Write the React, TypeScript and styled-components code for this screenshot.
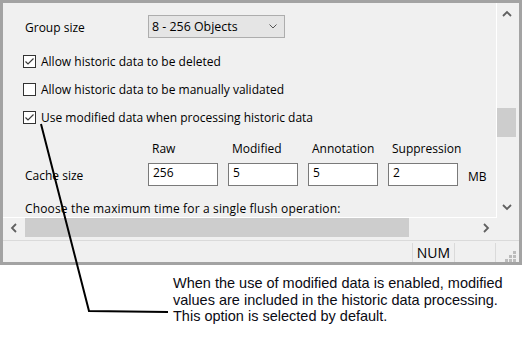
import React from "react"
import styled, { createGlobalStyle } from "styled-components"

const GlobalStyle = createGlobalStyle`
  html, body {
    margin: 0;
    padding: 0;
    background: #ffffff;
  }
  * { box-sizing: border-box; }
`

const uiFont = `"Open Sans", "Noto Sans", "DejaVu Sans", sans-serif`

const Page = styled.div`
  position: relative;
  width: 522px;
  height: 350px;
  background: #ffffff;
  overflow: hidden;
`

const Window = styled.div`
  width: 522px;
  height: 265px;
  border: 3px solid #a3a3a3;
  background: #f0f0f0;
  display: grid;
  grid-template-columns: 494px 22px;
  grid-template-rows: 215px 19px 1fr;
  font-family: ${uiFont};
  font-size: 12px;
  color: #000;
`

const Content = styled.div`
  overflow: hidden;
  border-right: 1px solid #ffffff;
  border-bottom: 1px solid #ffffff;
  padding: 12px 0 0 22px;
  white-space: nowrap;
`

const FormGrid = styled.div`
  display: grid;
  grid-template-columns: 113px 70px 70px 70px 70px auto;
  column-gap: 10px;
`

const FieldLabel = styled.div<{ $top?: number }>`
  line-height: 16px;
  margin-top: ${p => p.$top ?? 0}px;
`

const Select = styled.div`
  grid-column: 2 / span 2;
  width: 137px;
  height: 23px;
  border: 1px solid #adadad;
  background: #e5e5e5;
  display: flex;
  align-items: center;
  justify-content: space-between;
  padding: 0 7px 1px 3px;
  font-size: 12.4px;
`

const CheckList = styled.div`
  margin: 9px 0 0 -2px;
  display: flex;
  flex-direction: column;
`

const CheckRow = styled.label`
  height: 28px;
  display: flex;
  align-items: center;
  gap: 5px;
`

const Box = styled.span`
  width: 13px;
  height: 13px;
  border: 1px solid #333333;
  background: #ffffff;
  display: flex;
  align-items: center;
  justify-content: center;
  flex: none;
`

const CacheGrid = styled(FormGrid)`
  margin-top: 10px;
  row-gap: 6px;
`

const ColHead = styled.div`
  line-height: 16px;
  padding-left: 4px;
`

const Field = styled.div`
  height: 23px;
  border: 1px solid #7a7a7a;
  background: #ffffff;
  padding: 1px 0 0 4px;
  line-height: 16px;
`

const Hint = styled.div`
  margin-top: 15px;
  line-height: 16px;
  letter-spacing: 0.15px;
`

const VScroll = styled.div`
  display: flex;
  flex-direction: column;
  background: #f0f0f0;
`

const HScroll = styled.div`
  display: flex;
  background: #f0f0f0;
`

const ArrowBtn = styled.div<{ $w: number; $h: number }>`
  width: ${p => p.$w}px;
  height: ${p => p.$h}px;
  flex: none;
  display: flex;
  align-items: center;
  justify-content: center;
`

const Track = styled.div<{ $vertical?: boolean }>`
  flex: 1;
  display: flex;
  flex-direction: ${p => (p.$vertical ? "column" : "row")};
`

const Thumb = styled.div<{ $vertical?: boolean }>`
  background: #cdcdcd;
  ${p =>
    p.$vertical
      ? "width: 19px; height: 29px; margin-top: 83px;"
      : "height: 19px; width: 384px;"}
`

const Corner = styled.div``

const StatusBar = styled.div`
  grid-column: 1 / span 2;
  margin-top: 3px;
  border-top: 1px solid #dadada;
  display: flex;
`

const Pane = styled.div<{ $w?: number }>`
  ${p => (p.$w ? `width: ${p.$w}px; flex: none;` : "flex: 1;")}
  margin-top: 2px;
  border-left: 1px solid #dadada;
  display: flex;
  align-items: center;
  justify-content: center;
  font-size: 14px;
  line-height: 16px;
  &:first-child { border-left: none; }
`

const GripPane = styled(Pane)`
  align-items: flex-end;
  justify-content: flex-end;
  padding: 0 3px 0 0;
`

const Note = styled.div`
  margin: 10px 0 0 173px;
  font-family: "Liberation Sans", Arial, sans-serif;
  font-size: 14.5px;
  line-height: 16.7px;
  color: #0b0b14;
`

const Leader = styled.svg`
  position: absolute;
  left: 0;
  top: 0;
  pointer-events: none;
`

const Chevron = ({ dir }: { dir: "up" | "down" | "left" | "right" }) => {
  const pts = {
    up: "1,6 5,2 9,6",
    down: "1,2 5,6 9,2",
    left: "6,1 2,5 6,9",
    right: "2,1 6,5 2,9",
  }[dir]
  const vertical = dir === "up" || dir === "down"
  return (
    <svg width={vertical ? 10 : 8} height={vertical ? 8 : 10} viewBox={vertical ? "0 0 10 8" : "0 0 8 10"}>
      <polyline points={pts} fill="none" stroke="#606060" strokeWidth="1.8" />
    </svg>
  )
}

const Check = ({ on }: { on: boolean }) => (
  <Box>
    {on && (
      <svg width="11" height="11" viewBox="0 0 11 11">
        <polyline points="1.5,5.5 4,8 9.5,2.5" fill="none" stroke="#3a3a3a" strokeWidth="1.2" />
      </svg>
    )}
  </Box>
)

const options = [
  { label: "Allow historic data to be deleted", on: true },
  { label: "Allow historic data to be manually validated", on: false },
  { label: "Use modified data when processing historic data", on: true },
]

const cache = [
  { head: "Raw", value: "256" },
  { head: "Modified", value: "5" },
  { head: "Annotation", value: "5" },
  { head: "Suppression", value: "2" },
]

export default function App() {
  return (
    <Page>
      <GlobalStyle />
      <Window>
        <Content>
          <FormGrid>
            <FieldLabel $top={5}>Group size</FieldLabel>
            <Select>
              <span>8 - 256 Objects</span>
              <svg width="8" height="5" viewBox="0 0 8 5">
                <polyline points="0.5,0.5 4,4 7.5,0.5" fill="none" stroke="#555" strokeWidth="1" />
              </svg>
            </Select>
          </FormGrid>

          <CheckList>
            {options.map(o => (
              <CheckRow key={o.label}>
                <Check on={o.on} />
                {o.label}
              </CheckRow>
            ))}
          </CheckList>

          <CacheGrid>
            <div />
            {cache.map(c => (
              <ColHead key={c.head}>{c.head}</ColHead>
            ))}
            <div />
            <FieldLabel $top={5}>Cache size</FieldLabel>
            {cache.map(c => (
              <Field key={c.head}>{c.value}</Field>
            ))}
            <FieldLabel $top={6}>MB</FieldLabel>
          </CacheGrid>

          <Hint>Choose the maximum time for a single flush operation:</Hint>
        </Content>

        <VScroll>
          <ArrowBtn $w={19} $h={22}><Chevron dir="up" /></ArrowBtn>
          <Track $vertical>
            <Thumb $vertical />
          </Track>
          <ArrowBtn $w={19} $h={22}><Chevron dir="down" /></ArrowBtn>
        </VScroll>

        <HScroll>
          <ArrowBtn $w={22} $h={19}><Chevron dir="left" /></ArrowBtn>
          <Track>
            <Thumb />
          </Track>
          <ArrowBtn $w={22} $h={19}><Chevron dir="right" /></ArrowBtn>
        </HScroll>
        <Corner />

        <StatusBar>
          <Pane />
          <Pane $w={42}>NUM</Pane>
          <Pane $w={41} />
          <GripPane $w={24}>
            <svg width="11" height="11" viewBox="0 0 11 11">
              {[[8, 0], [4, 4], [8, 4], [0, 8], [4, 8], [8, 8]].map(([x, y]) => (
                <rect key={`${x}-${y}`} x={x} y={y} width="3" height="3" fill="#bcbcbc" />
              ))}
            </svg>
          </GripPane>
        </StatusBar>
      </Window>

      <Note>
        When the use of modified data is enabled, modified
        <br />
        values are included in the historic data processing.
        <br />
        This option is selected by default.
      </Note>

      <Leader width="522" height="350" viewBox="0 0 522 350">
        <polyline points="41,124 89,311 168,312" fill="none" stroke="#000" strokeWidth="2" />
      </Leader>
    </Page>
  )
}
